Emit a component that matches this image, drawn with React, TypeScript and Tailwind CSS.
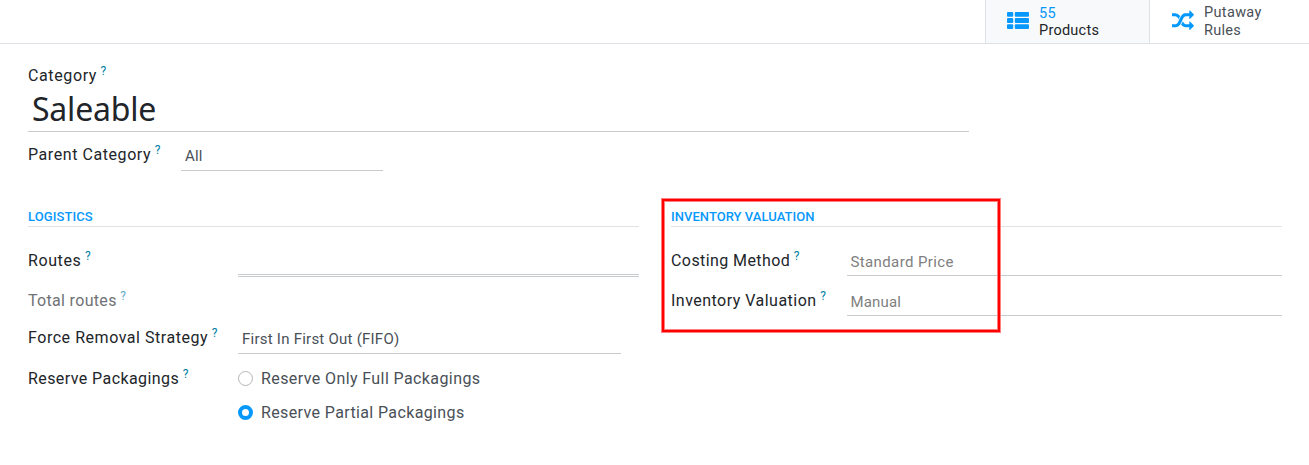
import type { ReactNode } from "react";

function ListIcon() {
  return (
    <svg width="22" height="18" viewBox="0 0 22 18" fill="#0798fb" className="shrink-0">
      {[0, 6.1, 12.2].map((y) => (
        <g key={y}>
          <rect x="0" y={y} width="6.2" height="4.8" rx="1" />
          <rect x="7.8" y={y} width="14.2" height="4.8" rx="1" />
        </g>
      ))}
    </svg>
  );
}

function ShuffleIcon() {
  return (
    <svg width="22" height="22" viewBox="0 0 1792 1792" fill="#0798fb" className="shrink-0">
      <path d="M666 481q-60 92-137 273-22-45-37-72.5t-40.5-63.5-51-56.5-63-35-81.5-14.5h-224q-14 0-23-9t-9-23v-192q0-14 9-23t23-9h224q250 0 410 225zm1126 799q0 14-9 23l-320 320q-9 9-23 9-13 0-22.5-9.5t-9.5-22.5v-192q-32 0-85 .5t-81 1-73-1-71-5-64-10.5-63-18.5-58-28.5-59-40-55-53.5-56-69.5q59-93 136-273 22 45 37 72.5t40.5 63.5 51 56.5 63 35 81.5 14.5h256v-192q0-14 9-23t23-9q12 0 24 10l319 319q9 9 9 23zm0-896q0 14-9 23l-320 320q-9 9-23 9-13 0-22.5-9.5t-9.5-22.5v-192h-256q-48 0-87 15t-69 45-51 61.5-45 77.5q-32 62-78 171-29 66-49.5 111t-54 105-64 100-74 83-90 68.5-106.5 42-128 16.5h-224q-14 0-23-9t-9-23v-192q0-14 9-23t23-9h224q48 0 87-15t69-45 51-61.5 45-77.5q32-62 78-171 29-66 49.5-111t54-105 64-100 74-83 90-68.5 106.5-42 128-16.5h256v-192q0-14 9-23t23-9q12 0 24 10l319 319q9 9 9 23z" />
    </svg>
  );
}

function Label({ children, className = "" }: { children: ReactNode; className?: string }) {
  return (
    <div className={`flex h-6 shrink-0 items-start whitespace-nowrap text-base leading-6 ${className}`}>
      <span>{children}</span>
      <sup className="static ml-[3.5px] -mt-px text-xs leading-4 tracking-normal text-[#0180a5]">?</sup>
    </div>
  );
}

function SectionTitle({ children, className = "" }: { children: ReactNode; className?: string }) {
  return (
    <h2 className={`h-[21px] border-b border-[#e2e2e2] text-[13px] font-medium leading-[22px] text-[#0798fb] ${className}`}>
      {children}
    </h2>
  );
}

function Radio({ checked = false, children, className = "" }: { checked?: boolean; children: ReactNode; className?: string }) {
  return (
    <label className={`flex h-[34px] items-start whitespace-nowrap leading-6 text-[#495057] ${className}`}>
      <span
        className={`mt-1 mr-2 size-[15px] shrink-0 rounded-full bg-white ${
          checked ? "border-[4.5px] border-[#0798fb]" : "border border-[#b5b5b5]"
        }`}
      />
      {children}
    </label>
  );
}

export default function App() {
  return (
    <div className="h-[465px] w-[1309px] overflow-hidden bg-white font-['Roboto',sans-serif] text-[#212529]">
      <header className="flex h-11 justify-end border-b border-[#dee2e6] text-[14.5px] leading-[18px]">
        <button className="flex w-[164px] items-start border-l border-[#dee2e6] bg-[#f8f9fa] pl-[21px] text-left">
          <span className="mt-3"><ListIcon /></span>
          <span className="mt-[5px] ml-2.5 flex flex-col">
            <span className="tracking-[0.3px] text-[#0798fb]">55</span>
            <span className="-mt-px tracking-[0.25px]">Products</span>
          </span>
        </button>
        <button className="flex w-40 items-start border-l border-[#dee2e6] pl-[22px] text-left text-[#495057]">
          <span className="mt-2.5"><ShuffleIcon /></span>
          <span className="mt-1 ml-2.5 flex flex-col">
            <span className="tracking-[0.34px]">Putaway</span>
            <span className="tracking-[0.3px]">Rules</span>
          </span>
        </button>
      </header>

      <main className="px-7 pt-5">
        <Label className="tracking-[0.62px]">Category</Label>
        <h1 className="h-11 w-[941px] border-b border-[#c9cccf] pl-1 font-['Noto_Sans',sans-serif] text-[32px] leading-[42px] tracking-[-0.2px]">
          Saleable
        </h1>
        <div className="flex h-[39px]">
          <Label className="mt-[11px] w-[153px] tracking-[0.57px]">Parent Category</Label>
          <div className="w-[202px] border-b border-[#c9cccf] pt-3 pl-1 text-[15px] leading-6 tracking-[0.2px] text-[#495057]">
            All
          </div>
        </div>

        <div className="mt-[35px] flex gap-8">
          <section className="w-[611px] shrink-0">
            <SectionTitle className="tracking-[0.1px]">LOGISTICS</SectionTitle>
            <div className="flex h-[50px]">
              <Label className="mt-[22px] w-[210px] tracking-[0.6px]">Routes</Label>
              <div className="mt-[47px] h-[3px] flex-1 border-y border-[#c9cccf]" />
            </div>
            <div className="flex h-12">
              <Label className="mt-3 tracking-[0.32px] opacity-65">Total routes</Label>
            </div>
            <div className="flex h-[29px]">
              <Label className="mt-px w-[210px] tracking-[0.54px]">Force Removal Strategy</Label>
              <div className="w-[383px] border-b border-[#c9cccf] pt-0.5 pl-1 text-[15px] leading-6 tracking-[0.24px] text-[#495057]">
                First In First Out (FIFO)
              </div>
            </div>
            <div className="flex pt-[13px]">
              <Label className="w-[210px] tracking-[0.42px]">Reserve Packagings</Label>
              <div>
                <Radio className="tracking-[0.405px]">Reserve Only Full Packagings</Radio>
                <Radio checked className="tracking-[0.375px]">Reserve Partial Packagings</Radio>
              </div>
            </div>
          </section>

          <section className="relative w-[611px] shrink-0">
            <SectionTitle className="tracking-[0.04px]">INVENTORY VALUATION</SectionTitle>
            <div className="flex h-[49px]">
              <Label className="mt-[22px] w-44 tracking-[0.42px]">Costing Method</Label>
              <div className="flex-1 border-b border-[#c9cccf] pt-[23px] pl-[3.5px] text-[15px] leading-6 tracking-[0.38px] text-[#808080]">
                Standard Price
              </div>
            </div>
            <div className="flex h-10">
              <Label className="mt-[13px] w-44 tracking-[0.48px]">Inventory Valuation</Label>
              <div className="flex-1 border-b border-[#c9cccf] pt-3.5 pl-[3.5px] text-[15px] leading-6 tracking-[0.15px] text-[#808080]">
                Manual
              </div>
            </div>
            <div className="absolute -top-[8px] -left-[10px] h-[135px] w-[340px] border border-[#ff7f7f]">
              <div className="h-full border-2 border-[#ff0000]">
                <div className="h-full border border-[#ff7f7f]" />
              </div>
            </div>
          </section>
        </div>
      </main>
    </div>
  );
}
